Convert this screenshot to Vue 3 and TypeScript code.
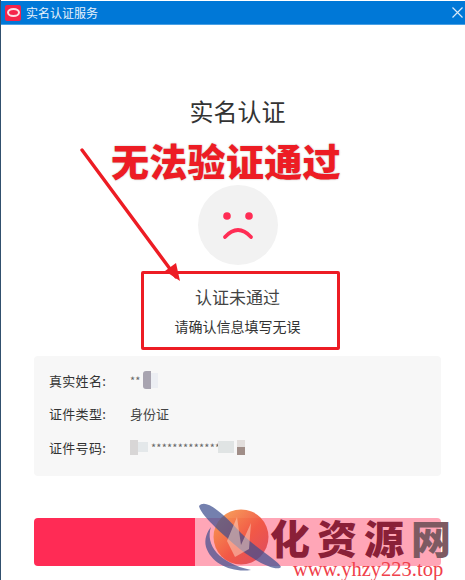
<script setup lang="ts">
interface Row { label: string; value?: string }
const rows: Row[] = [
  { label: '真实姓名:' },
  { label: '证件类型:', value: '身份证' },
  { label: '证件号码:' },
]
</script>

<template>
  <div class="window">
    <header class="titlebar">
      <span class="app-icon"><span class="app-ring"></span></span>
      <span class="app-name">实名认证服务</span>
      <svg class="close" width="11" height="11" viewBox="0 0 11 11">
        <path d="M0.5 0.5 L10.5 10.5 M10.5 0.5 L0.5 10.5" stroke="#d8e9f8" stroke-width="1.2" fill="none" />
      </svg>
    </header>

    <main class="content">
      <h1 class="heading">实名认证</h1>
      <div class="face">
        <svg width="80" height="80" viewBox="0 0 80 80">
          <circle cx="29" cy="31" r="3.8" fill="#ff2d55" />
          <circle cx="51" cy="31" r="3.8" fill="#ff2d55" />
          <path d="M27 52 Q40 38 53 52" stroke="#ff2d55" stroke-width="3.8" stroke-linecap="round" fill="none" />
        </svg>
      </div>
      <p class="status">认证未通过</p>
      <p class="hint">请确认信息填写无误</p>

      <section class="info">
        <div v-for="(row, i) in rows" :key="row.label" class="row">
          <span class="label">{{ row.label }}</span>
          <span v-if="row.value" class="value">{{ row.value }}</span>
          <span v-else-if="i === 0" class="value masked">
            <span class="stars">**</span><i class="m m1"></i><i class="m m2"></i>
          </span>
          <span v-else class="value masked">
            <i class="m m3"></i><i class="m m4"></i><span class="stars long">*************</span><i class="m m5"></i><i class="m m6"></i>
          </span>
        </div>
      </section>

      <div class="submit"></div>
    </main>

    <div class="annotation-text">无法验证通过</div>
    <div class="annotation-box"></div>
    <svg class="annotation-arrow" width="465" height="580" viewBox="0 0 465 580">
      <path d="M82 150 L176 277" stroke="#ed1c24" stroke-width="3.4" stroke-linecap="round" fill="none" />
      <path d="M180 281 L165 271 L176 263 Z" fill="#ed1c24" />
    </svg>

    <div class="wm-band"></div>
    <svg class="wm-logo" width="90" height="74" viewBox="0 0 90 74">
      <defs>
        <linearGradient id="ball" x1="0" y1="0" x2="1" y2="1">
          <stop offset="0" stop-color="#f7a24a" />
          <stop offset="0.55" stop-color="#f0503a" />
          <stop offset="1" stop-color="#d8405a" />
        </linearGradient>
      </defs>
      <circle cx="44" cy="36" r="27.5" fill="url(#ball)" opacity="0.9" />
      <path d="M2 5 C8 -2 22 8 44 32 C60 48 82 60 84 66 C80 71 56 60 38 44 C20 28 4 14 2 5 Z" fill="#3f4f8f" opacity="0.72" />
      <path d="M14 26 C8 44 22 62 54 69 C34 72 14 62 9 46 C7 38 10 31 14 26 Z" fill="#43508f" opacity="0.72" />
      <path d="M30 40 L40 16 L44 44 L54 22 L52 48 L38 56 Z" fill="#fbd9c8" opacity="0.5" />
    </svg>
    <div class="wm-name"><span>化</span><span>资</span><span>源</span><span class="grey">网</span></div>
    <div class="wm-url">www.yhzy223.top</div>
  </div>
</template>

<style>
html, body { margin: 0; background: #fff; }
</style>

<style scoped>
.window {
  position: relative;
  width: 465px;
  height: 580px;
  overflow: hidden;
  box-sizing: border-box;
  padding-top: 1px;
  background: #fff;
  border-left: 1px solid #31506e;
  font-family: "Noto Sans CJK SC", "Noto Sans", sans-serif;
}
.titlebar {
  display: flex;
  align-items: center;
  height: 23px;
  padding: 0 2px 0 4px;
  background: #0078d7;
  border-bottom: 1px solid #4aa0e4;
  box-sizing: content-box;
}
.app-icon {
  display: flex;
  align-items: center;
  justify-content: center;
  width: 16px;
  height: 16px;
  border-radius: 2px;
  background: #f5234a;
}
.app-ring {
  width: 9px;
  height: 5px;
  border: 2px solid #fbdfe4;
  border-radius: 50%;
}
.app-name {
  margin-left: 5px;
  color: #e6f1fb;
  font-size: 12px;
}
.close { margin-left: auto; }

.content {
  display: flex;
  flex-direction: column;
  align-items: center;
  padding: 72px 24px 0 33px;
}
.heading {
  margin: 0;
  height: 28px;
  line-height: 28px;
  font-size: 24px;
  font-weight: 400;
  color: #333;
}
.face {
  width: 80px;
  height: 80px;
  margin-top: 60px;
  border-radius: 50%;
  background: #f2f2f2;
}
.status {
  margin: 22px 0 0;
  line-height: 20px;
  font-size: 17px;
  color: #444;
}
.hint {
  margin: 10px 0 0;
  line-height: 18px;
  font-size: 14px;
  color: #333;
}
.info {
  align-self: stretch;
  display: flex;
  flex-direction: column;
  gap: 13.5px;
  margin-top: 21px;
  padding: 14px 16px 19px 15px;
  background: #f7f7f7;
  border-radius: 4px;
}
.row {
  display: flex;
  align-items: center;
  height: 20px;
  font-size: 13px;
  color: #333;
}
.label { width: 81px; letter-spacing: 0.3px; }
.value { color: #444; }
.masked {
  display: flex;
  align-items: center;
  height: 18px;
}
.stars { font-size: 11px; line-height: 14px; color: #666; }
.stars.long { letter-spacing: 0.2px; margin-left: 1px; }
.m { display: block; }
.m1 { width: 8px; height: 18px; margin-left: 3px; background: #a8a4b0; border-radius: 3px 0 0 3px; }
.m2 { width: 7px; height: 15px; background: #eceef3; }
.m3 { width: 8px; height: 15px; background: #d8d6d6; }
.m4 { width: 10px; height: 10px; background: #e4e8ea; margin-right: 2px; }
.m5 { width: 16px; height: 12px; margin-left: -2px; background: #e0e4e4; }
.m6 { width: 8px; height: 15px; margin-left: 3px; background: linear-gradient(#e2dedc 50%, #a08e88 50%); }

.submit {
  align-self: stretch;
  height: 48px;
  margin-top: 42px;
  border-radius: 4px;
  background: #ff2b55;
}

.annotation-text {
  position: absolute;
  left: 110px;
  top: 137px;
  font-size: 38px;
  line-height: 46px;
  font-weight: 900;
  color: #ed1c24;
  white-space: nowrap;
  letter-spacing: 0.3px;
  paint-order: stroke fill;
  -webkit-text-stroke: 4px #fff;
  text-shadow: 0 0 2px #bbb;
}
.annotation-box {
  position: absolute;
  left: 140px;
  top: 271px;
  width: 199px;
  height: 79px;
  box-sizing: border-box;
  border: 3px solid #ed1c24;
  border-radius: 2px;
}
.annotation-arrow {
  position: absolute;
  left: -1px;
  top: 0;
  pointer-events: none;
}

.wm-band {
  position: absolute;
  left: 194px;
  top: 518px;
  width: 246px;
  height: 48px;
  background: rgba(255, 255, 255, 0.58);
}
.wm-logo {
  position: absolute;
  left: 196px;
  top: 501px;
}
.wm-name {
  position: absolute;
  left: 269px;
  top: 516px;
  display: flex;
  gap: 7px;
  font-size: 40px;
  line-height: 42px;
  font-weight: 900;
  color: #8a2038;
  white-space: nowrap;
}
.wm-name .grey { color: #7d5a62; }
.wm-url {
  position: absolute;
  left: 292px;
  top: 559px;
  font-family: "Liberation Serif", serif;
  font-size: 20.5px;
  line-height: 20px;
  color: #f0404a;
  white-space: nowrap;
}
</style>
